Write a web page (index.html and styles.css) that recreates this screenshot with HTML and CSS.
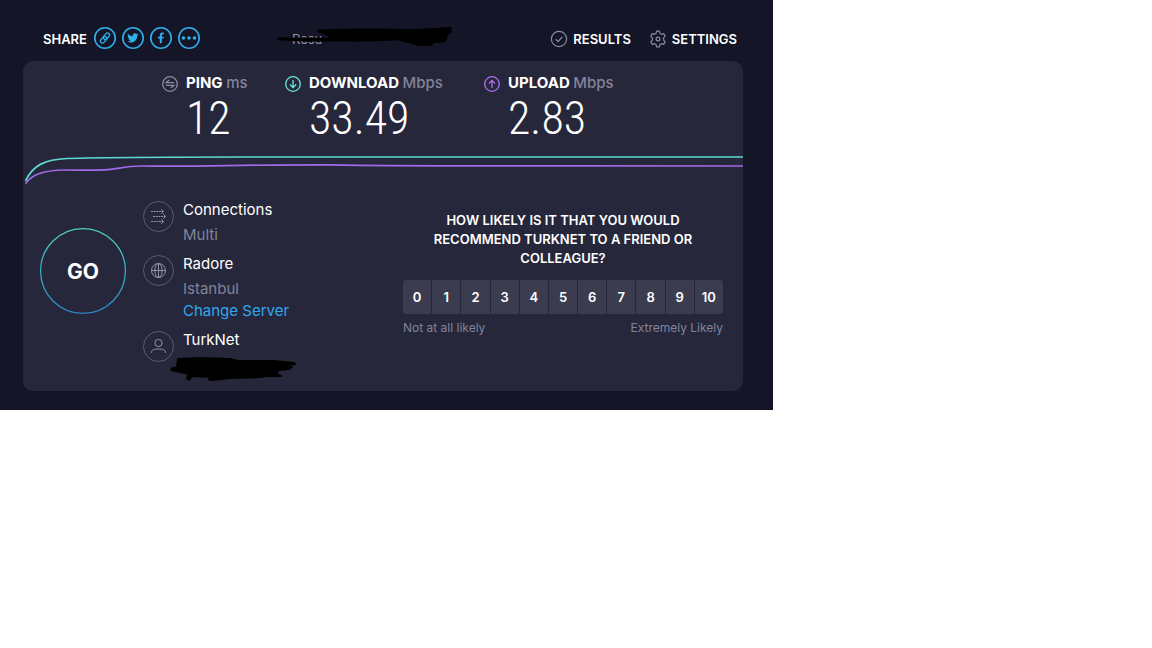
FILE: index.html
```html
<!DOCTYPE html>
<html lang="en">
<head>
<meta charset="utf-8">
<meta name="viewport" content="width=device-width, initial-scale=1">
<title>Speed test result</title>
<link rel="stylesheet" href="styles.css">
</head>
<body>
<main class="app">
  <header class="topbar">
    <div class="share">
      <span class="share-label">SHARE</span>
      <a class="share-link" href="#link" aria-label="Copy link">
        <svg class="share-icon" viewBox="0 0 22 22"><circle cx="11" cy="11" r="10.2"/><g transform="rotate(-50 11 11)" stroke-width="1.3"><rect x="5" y="9" width="7.400" height="4" rx="2"/><rect x="9.600" y="9" width="7.400" height="4" rx="2"/></g></svg>
      </a>
      <a class="share-link" href="#twitter" aria-label="Share on Twitter">
        <svg class="share-icon" viewBox="0 0 22 22"><circle cx="11" cy="11" r="10.2"/><path class="solid" d="M16.600 7.400c-.4.2-.9.3-1.300.4.5-.3.8-.7 1-1.300-.5.3-1 .5-1.500.6a2.300 2.300 0 0 0-4 2.100c-2-.1-3.700-1-4.800-2.400-.6 1-.3 2.300.7 3.100-.4 0-.7-.1-1-.3 0 1.100.8 2.100 1.900 2.300-.4.1-.7.1-1 0 .3 1 1.200 1.600 2.200 1.600-1 .8-2.200 1.100-3.400 1 4.300 2.700 10-.2 9.900-6 .5-.3.900-.7 1.300-1.100z"/></svg>
      </a>
      <a class="share-link" href="#facebook" aria-label="Share on Facebook">
        <svg class="share-icon" viewBox="0 0 22 22"><circle cx="11" cy="11" r="10.2"/><path class="solid" d="M9.800 16.300v-4.700H8V9.800h1.800V8.300c0-1.800 1-2.700 2.600-2.700h1.400v1.700h-1c-.8 0-1 .4-1 1.100v1.400h2l-.3 1.800h-1.700v4.700z"/></svg>
      </a>
      <a class="share-link" href="#more" aria-label="More sharing options">
        <svg class="share-icon" viewBox="0 0 22 22"><circle cx="11" cy="11" r="10.2"/><g class="solid"><circle cx="5.500" cy="11" r="1.800"/><circle cx="11" cy="11" r="1.800"/><circle cx="16.500" cy="11" r="1.800"/></g></svg>
      </a>
    </div>
    <div class="result-id">
      <span>Resu</span>
      <svg class="scribble scribble-id" viewBox="0 0 170 22" aria-hidden="true"><path d="M2 12c20 1 30 2 48 1l-3-5-10-4c15 0 20-1 37-1h30c20 1 30 1 40 0l24-1.500v3l-3 2-2 7-8 1-7 0 2 2-3 1-10 0-14-4-8-2c-20 2-50 2-65 1-20-1-35 0-53-.5z"/></svg>
    </div>
    <nav class="nav">
      <a class="nav-link" href="#results">
        <svg class="nav-icon" viewBox="0 0 18 18"><circle cx="9" cy="9" r="7.600"/><path d="M5.700 9.200l2.300 2.300 4.400-4.700"/></svg>RESULTS</a>
      <a class="nav-link" href="#settings">
        <svg class="nav-icon" viewBox="0 0 18 18"><path d="M7.600 1.200h2.800l.6 2.200 1.500.9 2.300-.6 1.400 2.400-1.600 1.700v2.400l1.600 1.700-1.400 2.400-2.300-.6-1.500.9-.6 2.200H7.600L7 14.600l-1.500-.9-2.300.6-1.400-2.400 1.600-1.700V7.800L1.800 6.100l1.400-2.400 2.300.6L7 3.400z"/><circle cx="9" cy="9" r="1.900"/></svg>SETTINGS</a>
    </nav>
  </header>

  <section class="card">
    <div class="metrics">
      <div class="metric">
        <svg class="metric-icon ping" viewBox="0 0 16 16"><circle cx="8" cy="8" r="7.300"/><path d="M12 6.600H4.200l3-2.500M4 9.400h7.800l-3 2.500"/></svg>
        <h2 class="metric-label">PING <span class="unit">ms</span></h2>
        <p class="metric-value">12</p>
      </div>
      <div class="metric">
        <svg class="metric-icon download" viewBox="0 0 16 16"><circle cx="8" cy="8" r="7.300"/><path d="M8 4v7.500M4.900 8.500L8 11.600l3.100-3.100"/></svg>
        <h2 class="metric-label">DOWNLOAD <span class="unit">Mbps</span></h2>
        <p class="metric-value">33.49</p>
      </div>
      <div class="metric">
        <svg class="metric-icon upload" viewBox="0 0 16 16"><circle cx="8" cy="8" r="7.300"/><path d="M8 12V4.500M4.900 7.500L8 4.400l3.100 3.100"/></svg>
        <h2 class="metric-label">UPLOAD <span class="unit">Mbps</span></h2>
        <p class="metric-value">2.83</p>
      </div>
    </div>

    <svg class="chart" viewBox="0 0 720 40" preserveAspectRatio="none" role="img" aria-label="Download and upload speed over time">
      <path class="line-upload" d="M2.500 33.500C9 25 18 20.500 42 20c16 0 32 .5 43-.3C95 19 103 16 118 16c60 1 100-1.500 190-1.200C390 16.500 500 15.500 720 16"/>
      <path class="line-download" d="M2.500 31C10 15 22 9.500 44 8.500 90 7 140 7 220 7h500"/>
    </svg>

    <div class="details">
      <button class="go" type="button">
        <svg class="go-ring" viewBox="0 0 86 86" aria-hidden="true"><defs><linearGradient id="ring" x1="0" y1="0" x2="0" y2="1"><stop offset="0" stop-color="#4fd0b5"/><stop offset=".5" stop-color="#38b3cc"/><stop offset="1" stop-color="#2b87c8"/></linearGradient></defs><circle cx="43" cy="43" r="42.400" stroke="url(#ring)"/></svg>
        <span>GO</span>
      </button>
      <div class="info">
        <div class="info-item">
          <svg class="info-icon" viewBox="0 0 31 31"><circle class="rim" cx="15.500" cy="15.500" r="15"/><path stroke-dasharray="2 .7" d="M8 10.500h12M10 15.500h12M8 20.500h12"/><path d="M18.300 8.300l2.300 2.200-2.300 2.200M20.300 13.300l2.300 2.200-2.300 2.200M18.300 18.300l2.300 2.200-2.300 2.200"/></svg>
          <div><p class="info-name">Connections</p><p class="info-sub">Multi</p></div>
        </div>
        <div class="info-item">
          <svg class="info-icon" viewBox="0 0 31 31"><circle class="rim" cx="15.500" cy="15.500" r="15"/><circle cx="15.500" cy="15.500" r="7"/><ellipse cx="15.500" cy="15.500" rx="3.600" ry="7"/><path d="M8.500 15.500h14M15.500 8.500v14"/></svg>
          <div><p class="info-name">Radore</p><p class="info-sub">Istanbul</p><a class="change" href="#server">Change Server</a></div>
        </div>
        <div class="info-item">
          <svg class="info-icon" viewBox="0 0 31 31"><circle class="rim" cx="15.500" cy="15.500" r="15"/><circle cx="15.500" cy="12" r="3.600"/><path d="M8.500 22v-.8c0-2.200 3-3.200 7-3.200s7 1 7 3.200v.8"/></svg>
          <div class="provider"><p class="info-name">TurkNet</p>
            <svg class="scribble scribble-ip" viewBox="0 0 128 26" aria-hidden="true"><path d="M9 3l22-1 30 1 8 2 36 0 20 2 1 1-14 2 11 1-3 2-10 1-3 3 5 3-15 0-6 1-29 1-20 2-2-1 5-2-22-1-3 4-2-2 2-4-9-2-9-2 2-2 8-1-4-2 1-4z"/></svg>
          </div>
        </div>
      </div>
      <div class="survey">
        <h3 class="survey-title" id="question">HOW LIKELY IS IT THAT YOU WOULD RECOMMEND TURKNET TO A FRIEND OR COLLEAGUE?</h3>
        <div class="scale" role="group" aria-labelledby="question">
          <button class="score" type="button">0</button>
          <button class="score" type="button">1</button>
          <button class="score" type="button">2</button>
          <button class="score" type="button">3</button>
          <button class="score" type="button">4</button>
          <button class="score" type="button">5</button>
          <button class="score" type="button">6</button>
          <button class="score" type="button">7</button>
          <button class="score" type="button">8</button>
          <button class="score" type="button">9</button>
          <button class="score" type="button">10</button>
        </div>
        <div class="legend"><span>Not at all likely</span><span>Extremely Likely</span></div>
      </div>
    </div>
  </section>
</main>
</body>
</html>
```
FILE: styles.css
```css
* { box-sizing: border-box; }

body {
  margin: 0;
  background: #fff;
  color: #fff;
  font-family: Inter, "Open Sans", sans-serif;
  font-size: 15px;
}

h2, h3, p { margin: 0; font-weight: 400; }
a { color: inherit; text-decoration: none; }
button { border: 0; padding: 0; color: inherit; font: inherit; cursor: pointer; }
svg { display: block; fill: none; }

.app {
  max-width: 773px;
  padding: 0 30px 19px 23px;
  background: #141526;
}

.topbar {
  display: grid;
  grid-template-columns: 249px 1fr auto;
  align-items: center;
  padding: 17px 6px 0 20px;
  min-height: 61px;
  font-size: 13px;
  font-weight: 600;
}

.share { display: flex; align-items: center; gap: 6px; }
.share-label { padding-right: 1px; }
.share-link { padding-bottom: 2px; }
.share-icon { width: 22px; height: 22px; stroke: #2fb0ee; stroke-width: 1.6; }
.share .solid { fill: #2fb0ee; stroke: none; }

.result-id { position: relative; color: #9193a8; font-weight: 400; }
.scribble { position: absolute; fill: #000; stroke: #000; stroke-width: 3; stroke-linejoin: round; }
.scribble-id { left: -10px; top: -4px; width: 170px; height: 22px; overflow: visible; }

.nav { display: flex; gap: 18px; }
.nav-link { display: flex; align-items: center; gap: 5px; }
.nav-icon { width: 18px; height: 18px; stroke: #8a8ca2; stroke-width: 1.2; stroke-linejoin: round; }

.card { border-radius: 10px; background: #26273b; overflow: hidden; }

.metrics {
  display: grid;
  grid-template-columns: 123px 199px 1fr;
  padding: 12px 0 0 139px;
}
.metric { display: grid; grid-template-columns: 16px 1fr; column-gap: 8px; align-items: center; }
.metric-icon { width: 16px; height: 16px; margin-top: 2px; stroke-width: 1.3; }
.ping { stroke: #8a8ca2; }
.download { stroke: #6ce8dd; }
.upload { stroke: #b070ee; }
.metric-label { font-size: 15px; font-weight: 700; line-height: 20px; white-space: nowrap; }
.unit { color: #82849a; font-weight: 500; }
.metric-value {
  grid-column: 2;
  font-family: "Roboto Condensed", Roboto, sans-serif;
  font-size: 46px;
  font-weight: 300;
  line-height: 50px;
}

.chart { width: 100%; height: 40px; margin: 7px 0 6px; stroke-width: 1.7; }
.line-download { stroke: #5fd9d3; }
.line-upload { stroke: #a06be6; }

.details {
  display: grid;
  grid-template-columns: 86px 236px 1fr;
  column-gap: 17px;
  align-items: start;
  padding: 0 20px 15px 17px;
}

.go {
  display: grid;
  place-items: center;
  margin-top: 32px;
  border-radius: 50%;
  background: none;
  font-size: 21px;
  font-weight: 700;
}
.go > * { grid-area: 1 / 1; }
.go-ring { width: 86px; height: 86px; stroke-width: 1.2; }

.info { display: grid; gap: 4px; }
.info-item { display: flex; align-items: start; gap: 9px; line-height: 22px; }
.info-icon { width: 31px; height: 31px; margin-top: 5px; stroke: #9193a8; stroke-width: 1; }
.info-icon .rim { stroke: #5b5c70; }
.info-name { line-height: 28px; }
.info-sub { color: #82849a; }
.change { display: block; color: #2fa9ee; }
.provider { position: relative; min-height: 50px; }
.scribble-ip { left: -14px; top: 30px; width: 128px; height: 26px; stroke-width: 2; overflow: visible; }

.survey { padding-top: 15px; margin-left: 7px; }
.survey-title { padding: 0 20px; font-size: 13px; font-weight: 600; line-height: 19px; text-align: center; }
.scale {
  display: grid;
  grid-template-columns: repeat(11, 1fr);
  gap: 1px;
  margin-top: 12px;
  border-radius: 3px;
  overflow: hidden;
}
.score { height: 34px; background: #3b3c50; font-size: 13px; font-weight: 600; }
.legend { display: flex; justify-content: space-between; margin-top: 5px; color: #82849a; font-size: 12px; line-height: 18px; }
```
